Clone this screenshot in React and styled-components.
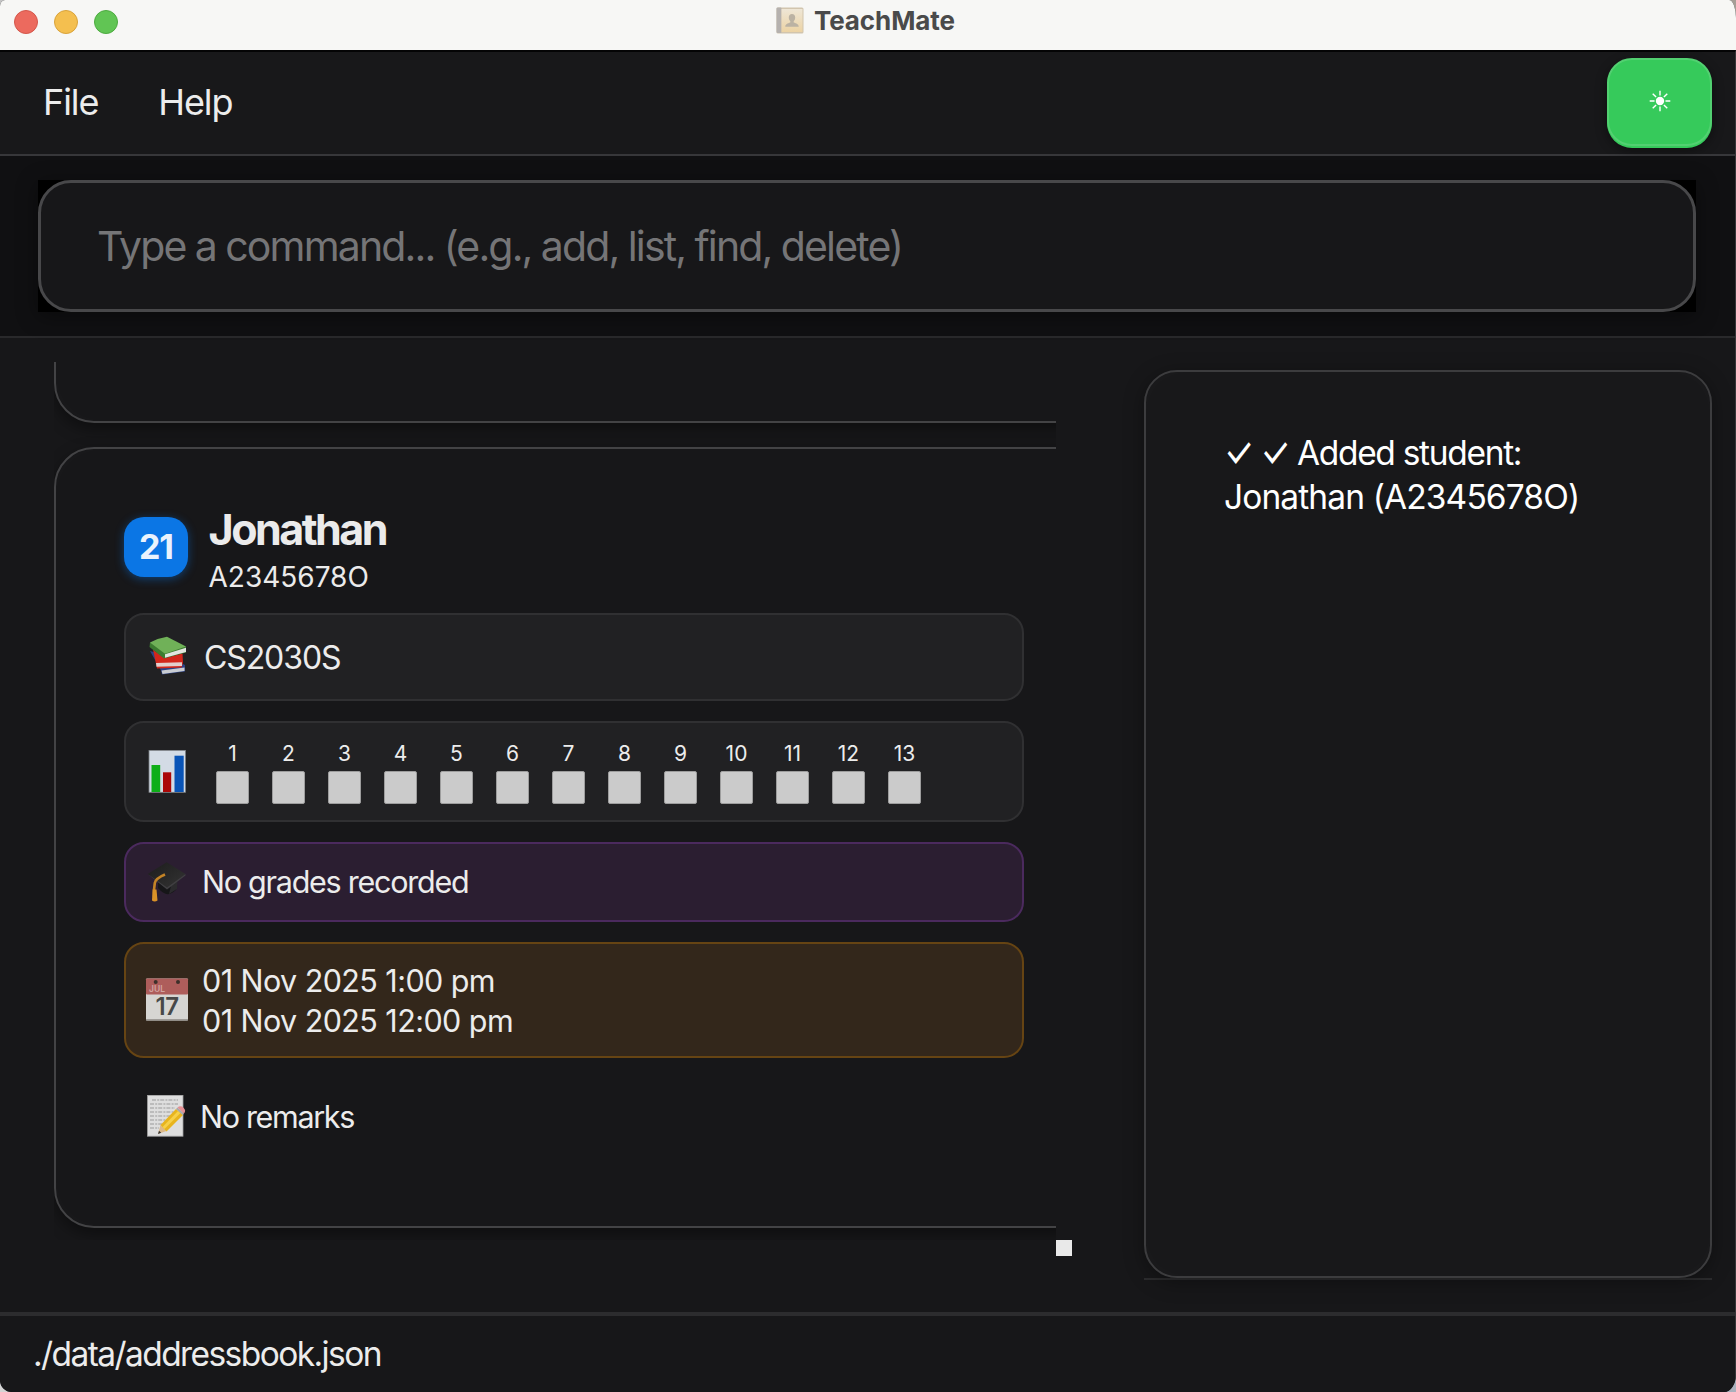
import React from "react";
import styled, { createGlobalStyle } from "styled-components";

const Global = createGlobalStyle`
  * { box-sizing: border-box; }
  body {
    margin: 0;
    background:
      linear-gradient(90deg, #d4d4d4 50%, #a9b0bc 50%) bottom / 100% 50% no-repeat,
      linear-gradient(90deg, #c4c4c4 50%, #a69e96 50%);
    font-family: Inter, "Liberation Sans", sans-serif;
    overflow: hidden;
  }
`;

const Window = styled.div`
  display: flex;
  flex-direction: column;
  width: 1736px;
  height: 1392px;
  overflow: hidden;
  background: #171719;
  border-radius: 5px 7px 12px 12px / 6px 18px 18px 12px;
`;

const TitleBar = styled.header`
  display: flex;
  align-items: flex-start;
  height: 50px;
  padding-left: 14px;
  background: #f7f7f5;
`;

const Lights = styled.div`
  display: flex;
  gap: 16px;
  width: 762px;
  padding-top: 10px;
`;

const Light = styled.span`
  width: 24px;
  height: 24px;
  border-radius: 50%;
  background: ${(p) => p.$fill};
  border: 1px solid ${(p) => p.$edge};
`;

const Title = styled.h1`
  display: flex;
  align-items: center;
  gap: 10px;
  height: 41px;
  margin: 0;
  font-size: 26px;
  font-weight: 700;
  letter-spacing: -0.1px;
  color: #4a4a4a;
`;

const Content = styled.div`
  display: flex;
  flex: 1;
  flex-direction: column;
  min-height: 0;
  border-top: 2px solid #040405;
  border-right: 1px solid #363638;
`;

const MenuBar = styled.nav`
  display: flex;
  justify-content: space-between;
  height: 104px;
  padding: 6px 23px 0 43px;
  background: #18181a;
  border-bottom: 2px solid #37373a;
`;

const Menus = styled.div`
  display: flex;
  align-items: center;
  gap: 60px;
  height: 87px;
`;

const MenuItem = styled.span`
  font-size: 36px;
  letter-spacing: -1.1px;
  color: #ececec;
`;

const ThemeButton = styled.button`
  display: flex;
  align-items: center;
  justify-content: center;
  width: 105px;
  height: 88px;
  padding: 0 0 2px;
  border: 2px solid #52d071;
  border-radius: 25px;
  background: #36ca5b;
  box-shadow: 0 2px 0 #36ca5b, 0 4px 12px rgba(0, 0, 0, 0.45);
`;

const CommandBar = styled.div`
  flex: none;
  height: 182px;
  padding: 24px 39px 24px 38px;
  background: #101012;
  border-bottom: 2px solid #29292b;
`;

const CommandBacking = styled.div`
  height: 132px;
  background: #000;
  box-shadow: 0 4px 20px rgba(0, 0, 0, 0.4);
`;

const CommandInput = styled.input`
  display: block;
  width: 100%;
  height: 132px;
  padding: 0 56px;
  border: 3px solid #48484a;
  border-radius: 33px;
  outline: none;
  background: #171719;
  font: 400 41px Inter, sans-serif;
  letter-spacing: -1.85px;
  word-spacing: -0.4px;
  color: #ececec;
  &::placeholder {
    color: #757577;
    opacity: 1;
  }
`;

const Main = styled.main`
  display: flex;
  flex: 1;
  min-height: 0;
  padding-left: 54px;
`;

const ListPane = styled.section`
  display: grid;
  grid-template: 878px 16px / 1002px 16px;
  margin: 24px 72px 0 0;
`;

const StudentList = styled.div`
  display: flex;
  flex-direction: column;
  justify-content: flex-end;
  gap: 24px;
  height: 878px;
  padding-bottom: 12px;
  overflow: hidden;
`;

const ScrollCorner = styled.span`
  grid-area: 2 / 2;
  background: #e9e9e9;
`;

const Card = styled.article`
  display: flex;
  flex: none;
  flex-direction: column;
  width: 1060px;
  height: 781px;
  padding: 57px 0 0 68px;
  border: 2px solid #434345;
  border-radius: 40px;
  background: #171719;
  box-shadow: 0 6px 16px rgba(0, 0, 0, 0.4), inset 0 0 30px rgba(255, 255, 255, 0.015);
`;

const CardHeader = styled.div`
  display: flex;
  gap: 20.500px;
  height: 88px;
  margin-bottom: 19px;
`;

const Badge = styled.span`
  display: flex;
  align-items: center;
  justify-content: center;
  width: 64px;
  height: 60px;
  margin-top: 11px;
  padding-bottom: 2px;
  border-radius: 20px;
  background: #0b76e5;
  box-shadow: 0 2px 10px rgba(11, 118, 229, 0.45);
  font-size: 34px;
  font-weight: 700;
  letter-spacing: -1px;
  color: #eaf3fd;
`;

const Identity = styled.div`
  display: flex;
  flex-direction: column;
  gap: 8px;
`;

const Name = styled.h2`
  margin: 0;
  font-size: 43px;
  font-weight: 700;
  line-height: 46px;
  letter-spacing: -2.5px;
  color: #ebebeb;
`;

const Matric = styled.span`
  font-size: 28px;
  line-height: 34px;
  color: #ebebeb;
`;

const tones = {
  neutral: ["#212123", "#303032"],
  grades: ["#2b1e31", "#4b2a5e"],
  schedule: ["#33271b", "#664413"],
  plain: ["transparent", "transparent"],
};

const Row = styled.div`
  display: flex;
  align-items: center;
  gap: ${(p) => p.$gap}px;
  width: 900px;
  height: ${(p) => p.$height}px;
  margin-bottom: 20px;
  padding-left: 19px;
  border: 2px solid ${(p) => tones[p.$tone][1]};
  border-radius: 20px;
  background: ${(p) => tones[p.$tone][0]};
`;

const RowText = styled.div`
  padding-top: ${(p) => p.$drop || 0}px;
  font-size: ${(p) => p.$size || 30.5}px;
  line-height: 40px;
  letter-spacing: ${(p) => p.$track}px;
  color: #ececec;
`;

const Glyph = styled.svg`
  flex: none;
  width: 44px;
  height: 44px;
`;

const Weeks = styled.div`
  display: flex;
  gap: 23px;
`;

const Week = styled.div`
  display: flex;
  flex-direction: column;
  align-items: center;
  gap: 4px;
  width: 33px;
  padding-top: 1px;
  font-size: 21px;
  line-height: 26px;
  color: #ececec;
`;

const WeekBox = styled.span`
  width: 33px;
  height: 33px;
  border: 1px solid #9d9d9d;
  border-radius: 2px;
  background: #cbcbcb;
`;

const ResultPane = styled.section`
  height: 910px;
  margin-top: 32px;
  border-bottom: 2px solid #2c2c2e;
`;

const ResultBox = styled.div`
  width: 568px;
  height: 908px;
  padding: 59px 78px;
  border: 2px solid #3c3c3e;
  border-radius: 33px;
  background: #18181a;
  box-shadow: 0 4px 20px rgba(0, 0, 0, 0.35), inset 0 0 30px rgba(255, 255, 255, 0.015);
`;

const ResultLine = styled.p`
  margin: 0;
  font-size: 33.5px;
  line-height: 44px;
  letter-spacing: ${(p) => p.$track}px;
  white-space: nowrap;
  color: #fff;
`;

const Tick = styled.span`
  display: inline-block;
  transform: translateY(3px) scaleY(1.3);
  transform-origin: 50% 74%;
`;

const StatusBar = styled.footer`
  display: flex;
  align-items: center;
  flex: none;
  height: 80px;
  padding-left: 33px;
  border-top: 4px solid #2c2c2e;
  background: #171719;
  font-size: 33.5px;
  letter-spacing: -1.58px;
  color: #ececec;
`;

const ContactsIcon = () => (
  <svg width="28" height="28" viewBox="0 0 28 28">
    <defs>
      <linearGradient id="cover" x2="0" y2="1">
        <stop offset="0" stopColor="#eee6d6" />
        <stop offset="1" stopColor="#ecd3a4" />
      </linearGradient>
    </defs>
    <rect x="0.5" y="0.500" width="27" height="26" rx="1.5" fill="#d2c5ae" />
    <rect x="0.500" y="0.500" width="5" height="25.500" rx="1" fill="#b5b1ae" />
    <rect x="5.5" y="2" width="21" height="23" fill="url(#cover)" />
    <path d="M16 7c2 0 3.2 1.4 3.2 3.6 0 1.6-.7 2.9-1.5 3.6v1.3c2.6.9 5 1.600 5 4.200H9.300c0-2.600 2.400-3.300 5-4.200v-1.300c-.8-.7-1.500-2-1.500-3.600C12.800 8.400 14 7 16 7z" fill="#bbb2a3" />
  </svg>
);

const SunIcon = () => (
  <svg width="22" height="22" viewBox="-11 -11 22 22">
    <circle r="4.200" fill="#fff" />
    <g stroke="#fff" strokeWidth="1.400">
      {[0, 45, 90, 135, 180, 225, 270, 315].map((a) => (
        <line key={a} x1="5.500" x2="10.300" transform={`rotate(${a})`} />
      ))}
    </g>
  </svg>
);

const BooksIcon = () => (
  <Glyph viewBox="0 0 44 44">
    <path d="M5 16L16 35.500 17 39.500 40 36.500V30L20 20z" fill="#2b4185" />
    <path d="M16.500 35.500L39.500 32.500V36L17.500 39z" fill="#c9ccd2" />
    <path d="M8 14.500L19 23l18.500-4.500L38 28l-1.500 4.500L12 33.500z" fill="#d3261b" />
    <path d="M11 28l26-.8V31l-25.500.8z" fill="#e3cfcd" />
    <path d="M5 7.500L4.500 12 19 23.500 41 17.500V11.500z" fill="#3c7c30" />
    <path d="M20 19.300L41 12.800v4.200L20 22.800z" fill="#e1e5df" />
    <path d="M5 7.500Q13 3 22 1.700L41 11.500 20 18.800z" fill="#70b158" />
  </Glyph>
);

const ChartIcon = () => (
  <Glyph viewBox="0 0 44 44">
    <rect x="4" y="0.300" width="36.500" height="42" fill="#d3dbe5" stroke="#7c8085" strokeWidth="0.800" />
    <rect x="6.500" y="15" width="8.700" height="27" fill="#0eae18" />
    <rect x="18" y="22.300" width="8.200" height="19.700" fill="#ab0808" />
    <rect x="29.500" y="5.700" width="9.200" height="36.300" fill="#0954b7" />
  </Glyph>
);

const CapIcon = () => (
  <Glyph viewBox="0 0 44 44">
    <defs>
      <linearGradient id="board" x2="1" y2="1">
        <stop offset="0" stopColor="#1c1c1c" />
        <stop offset="1" stopColor="#343434" />
      </linearGradient>
    </defs>
    <path d="M13 18v10q6 7 11 6 6-2 8-6V16z" fill="#161618" />
    <path d="M24 34l8-5 .5-10-6 5z" fill="#2b2b2d" />
    <path d="M2.700 14L21.700 2.300 40.500 14 22 28.500z" fill="url(#board)" />
    <path d="M2.700 14L22 27.500 40.500 14v1.500L22 29.500z" fill="#403f42" />
    <path d="M20 14.500Q10.500 18.500 9.800 23L9 30" fill="none" stroke="#c38326" strokeWidth="2.600" />
    <path d="M7.500 29.500h4l1 11q-2.800 2-5.500 0z" fill="#db9228" />
  </Glyph>
);

const CalendarIcon = () => (
  <Glyph viewBox="0 0 44 44">
    <rect x="1" y="0.500" width="42" height="42" rx="1" fill="#d6d5d2" />
    <rect x="1" y="0.500" width="42" height="16" rx="1" fill="#ae5d5b" />
    <rect x="1" y="41" width="42" height="1.500" fill="#9e9b97" />
    <circle cx="10.700" cy="4" r="2" fill="#3d302a" />
    <circle cx="33" cy="4" r="2" fill="#3d302a" />
    <text x="4" y="14" fontSize="8.500" fontWeight="600" fill="#d3a3a0">JUL</text>
    <text x="22" y="37.200" fontSize="24" fontWeight="600" letterSpacing="-0.500" textAnchor="middle" fill="#484848">17</text>
  </Glyph>
);

const MemoIcon = () => (
  <Glyph viewBox="0 0 44 44">
    <rect x="2.500" y="0.200" width="35.500" height="41" fill="#dedede" stroke="#a0a0a0" strokeWidth="0.800" />
    <path
      d="M7 5h26M5 9h28M5 13h25M5 17h24M5 21h20M5 25h16M5 29h12M5 33h9"
      stroke="#b1b1b1"
      strokeWidth="1.300"
      strokeDasharray="4 1.200 2 1"
    />
    <path d="M13 39l2.500-9 6 6z" fill="#dcb98a" />
    <path d="M13 39l1-3.300 2.200 2.100z" fill="#333" />
    <path d="M15.500 30L31 14l7 6L21.500 36.500z" fill="#e8b41d" />
    <path d="M17.500 32L33 16l2.500 2L19.500 34z" fill="#f6d04a" />
    <path d="M31 14l1.500-1.500 6.500 6-1.300 1.500z" fill="#aaa9ac" />
    <path d="M32.500 12.500q3-2.500 6 .3t.5 5.700z" fill="#e58f93" />
  </Glyph>
);

const WEEKS = Array.from({ length: 13 }, (_, i) => i + 1);

function StudentCard() {
  return (
    <Card>
      <CardHeader>
        <Badge>21</Badge>
        <Identity>
          <Name>Jonathan</Name>
          <Matric>A2345678O</Matric>
        </Identity>
      </CardHeader>
      <Row $tone="neutral" $height={88} $gap={15}>
        <BooksIcon />
        <RowText $size={32} $track={-1.1} $drop={2}>CS2030S</RowText>
      </Row>
      <Row $tone="neutral" $height={101} $gap={27}>
        <ChartIcon />
        <Weeks>
          {WEEKS.map((n) => (
            <Week key={n}>
              {n}
              <WeekBox />
            </Week>
          ))}
        </Weeks>
      </Row>
      <Row $tone="grades" $height={80} $gap={13}>
        <CapIcon />
        <RowText $track={-1.25}>No grades recorded</RowText>
      </Row>
      <Row $tone="schedule" $height={116} $gap={13}>
        <CalendarIcon />
        <RowText $track={-0.57} $drop={2}>
          01 Nov 2025 1:00 pm
          <br />
          01 Nov 2025 12:00 pm
        </RowText>
      </Row>
      <Row $tone="plain" $height={78} $gap={11}>
        <MemoIcon />
        <RowText $track={-1.32}>No remarks</RowText>
      </Row>
    </Card>
  );
}

export default function App() {
  return (
    <>
      <Global />
      <Window>
        <TitleBar>
          <Lights>
            <Light $fill="#ec6a5e" $edge="#d4574b" />
            <Light $fill="#f4bf4f" $edge="#d9a33b" />
            <Light $fill="#61c554" $edge="#4dab40" />
          </Lights>
          <Title>
            <ContactsIcon />
            TeachMate
          </Title>
        </TitleBar>
        <Content>
          <MenuBar>
            <Menus>
              <MenuItem>File</MenuItem>
              <MenuItem>Help</MenuItem>
            </Menus>
            <ThemeButton aria-label="Toggle theme">
              <SunIcon />
            </ThemeButton>
          </MenuBar>
          <CommandBar>
            <CommandBacking>
              <CommandInput placeholder="Type a command... (e.g., add, list, find, delete)" />
            </CommandBacking>
          </CommandBar>
          <Main>
            <ListPane>
              <StudentList>
                <Card />
                <StudentCard />
              </StudentList>
              <ScrollCorner />
            </ListPane>
            <ResultPane>
              <ResultBox>
                <ResultLine $track={-1.3}>
                  <Tick>✓</Tick> <Tick>✓</Tick> Added student:
                </ResultLine>
                <ResultLine $track={-0.88}>Jonathan (A2345678O)</ResultLine>
              </ResultBox>
            </ResultPane>
          </Main>
          <StatusBar>./data/addressbook.json</StatusBar>
        </Content>
      </Window>
    </>
  );
}
